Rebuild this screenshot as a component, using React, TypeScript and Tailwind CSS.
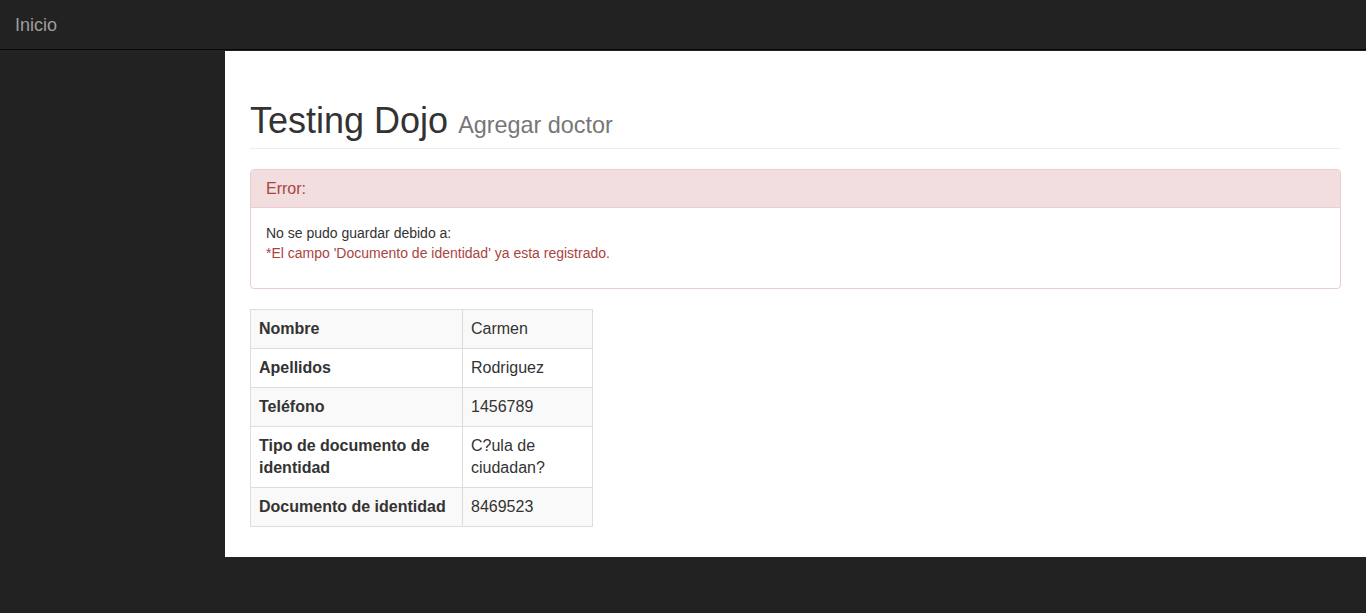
const rows: { label: string; value: string[] }[] = [
  { label: 'Nombre', value: ['Carmen'] },
  { label: 'Apellidos', value: ['Rodriguez'] },
  { label: 'Teléfono', value: ['1456789'] },
  { label: 'Tipo de documento de identidad', value: ['C?ula de', 'ciudadan?'] },
  { label: 'Documento de identidad', value: ['8469523'] },
];

export default function App() {
  return (
    <div className="min-h-screen bg-[#222] font-['Liberation_Sans',Arial,sans-serif] text-[#333]">
      {/* Navbar */}
      <nav className="h-[50px] border-b border-[#080808] bg-[#222]">
        <a className="block px-[15px] py-[15px] text-[18px] leading-[20px] text-[#9d9d9d]">Inicio</a>
      </nav>

      <div className="flex pt-px">
        <aside className="w-[225px] shrink-0" />

        <main className="flex-1 bg-white px-[25px] pt-[50px] pb-[30px]">
          {/* Page header */}
          <div className="border-b border-[#eee] pb-[7px]">
            <h1 className="text-[36px] leading-[1.1] font-normal text-[#333]">
              Testing Dojo{' '}
              <small className="text-[23.4px] leading-none text-[#777]">Agregar doctor</small>
            </h1>
          </div>

          {/* Error panel */}
          <div className="mt-[20px] mb-[20px] rounded-[4px] border border-[#ebccd1] bg-white">
            <div className="rounded-t-[3px] border-b border-[#ebccd1] bg-[#f2dede] px-[15px] py-[10px] text-[16px] leading-[17.6px] text-[#a94442]">
              Error:
            </div>
            <div className="p-[15px] text-[14px] leading-[20px]">
              <p className="mb-[10px]">
                No se pudo guardar debido a:
                <br />
                <span className="text-[#a94442]">*El campo 'Documento de identidad' ya esta registrado.</span>
              </p>
            </div>
          </div>

          {/* Data table */}
          <table className="w-[343px] border-collapse border border-[#ddd] text-[16px] leading-[22px]">
            <tbody>
              {rows.map((r, i) => (
                <tr key={r.label} className={i % 2 === 0 ? 'bg-[#f9f9f9]' : 'bg-white'}>
                  <td className="w-[212px] border border-[#ddd] p-[8px] align-top font-bold">{r.label}</td>
                  <td className="border border-[#ddd] p-[8px] align-top">
                    {r.value.map((v, j) => (
                      <div key={j}>{v}</div>
                    ))}
                  </td>
                </tr>
              ))}
            </tbody>
          </table>
        </main>
      </div>
    </div>
  );
}
